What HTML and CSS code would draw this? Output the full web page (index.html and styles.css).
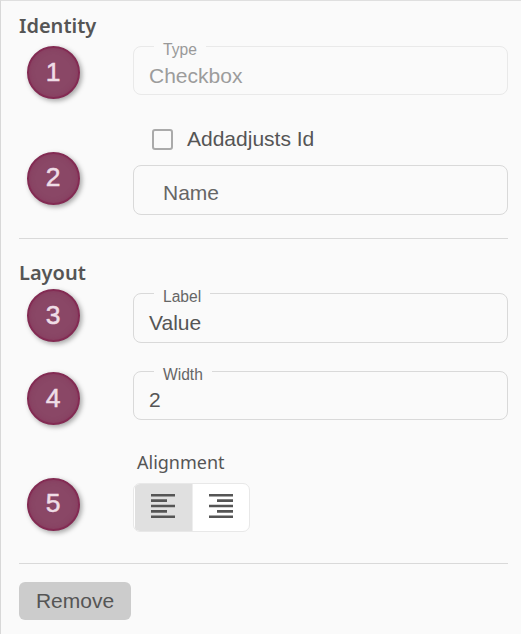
FILE: index.html
```html
<!DOCTYPE html>
<html lang="en">
<head>
<meta charset="utf-8">
<title>Properties</title>
<link rel="stylesheet" href="styles.css">
</head>
<body>
<main class="panel">
  <section class="section identity">
    <h2 class="heading">Identity</h2>
    <div class="row type-row">
      <span class="badge">1</span>
      <div class="field disabled"><span class="legend">Type</span><span class="value">Checkbox</span></div>
    </div>
    <div class="row name-row">
      <span class="badge">2</span>
      <div class="stack">
        <label class="check"><span class="box"></span><span class="check-text">Addadjusts Id</span></label>
        <div class="field empty"><span class="value">Name</span></div>
      </div>
    </div>
  </section>
  <section class="section layout">
    <h2 class="heading">Layout</h2>
    <div class="row label-row">
      <span class="badge">3</span>
      <div class="field tall"><span class="legend">Label</span><span class="value">Value</span></div>
    </div>
    <div class="row width-row">
      <span class="badge">4</span>
      <div class="field"><span class="legend">Width</span><span class="value">2</span></div>
    </div>
    <div class="row align-row">
      <span class="badge">5</span>
      <div class="stack">
        <span class="caption">Alignment</span>
        <div class="toggle">
          <span class="option selected"><svg width="24" height="24" viewBox="0 0 24 24"><path d="M0 0h24v2.6H0zM0 5.35h16v2.6H0zM0 10.7h24v2.6H0zM0 16.05h16v2.6H0zM0 21.4h24V24H0z"/></svg></span>
          <span class="option"><svg width="24" height="24" viewBox="0 0 24 24"><path d="M0 0h24v2.6H0zM8 5.35h16v2.6H8zM0 10.7h24v2.6H0zM8 16.05h16v2.6H8zM0 21.4h24V24H0z"/></svg></span>
        </div>
      </div>
    </div>
  </section>
  <button class="remove" type="button">Remove</button>
</main>
</body>
</html>
```
FILE: styles.css
```css
* { box-sizing: border-box; }
body { margin: 0; background: #fafafa; }
.panel {
  height: 634px;
  padding: 0 13px 0 18px;
  border-top: 1px solid #dfdfdf;
  border-left: 1px solid #d8d8d8;
  font-family: "Liberation Sans", Arial, sans-serif;
  font-size: 21px;
  color: #555;
}
.section { border-bottom: 1px solid #d9d9d9; }
.identity { height: 238px; padding-top: 11px; }
.layout { height: 325px; padding-top: 20px; }
.heading {
  margin: 0;
  height: 28px;
  font: 600 20px/28px "Noto Sans", sans-serif;
}
.row {
  display: grid;
  grid-template-columns: 114px 1fr;
  align-items: start;
}
.badge {
  display: flex;
  align-items: center;
  justify-content: center;
  width: 53px;
  height: 53px;
  margin: 1px 0 0 7.5px;
  padding-bottom: 1px;
  border: 2px solid #832b53;
  border-radius: 50%;
  background: #8a4766;
  box-shadow: 2px 2px 5px rgba(0, 0, 0, .35), inset 0 0 5px rgba(131, 43, 83, .5);
  color: #efdde6;
  font-size: 26.5px;
  line-height: 1;
  -webkit-text-stroke: .5px #efdde6;
}
.field {
  position: relative;
  height: 49px;
  padding: 17px 15px 0;
  border: 1px solid #d9d9d9;
  border-radius: 8px;
  line-height: 24px;
}
.value { display: block; }
.tall, .empty { height: 50px; }
.empty { padding: 15px 29px 0; color: #666; }
.legend {
  position: absolute;
  top: -7px;
  left: 20px;
  padding: 0 9px;
  background: #fafafa;
  font-size: 15.6px;
  line-height: 20px;
  color: #666;
}
.width-row .field { padding-top: 16px; }
.disabled { border-color: #e9e9e9; color: #9c9c9c; }
.disabled .legend { color: #999; }
.type-row { margin-top: 5px; }
.type-row .field { margin-top: 1px; }
.name-row { margin-top: 29px; }
.name-row .badge { margin-top: 23.5px; }
.check {
  display: flex;
  align-items: center;
  height: 22px;
  padding-left: 19px;
  margin-bottom: 15px;
}
.box {
  width: 21px;
  height: 21px;
  margin-right: 14px;
  border: 2px solid #aaa;
  border-radius: 3px;
}
.label-row { margin-top: 2px; }
.label-row .badge { margin-top: 0; }
.label-row .field { margin-top: 4px; }
.width-row { margin-top: 28px; }
.align-row { margin-top: 25px; }
.align-row .badge { margin-top: 27.5px; }
.caption {
  display: block;
  height: 33px;
  padding-left: 4px;
  font: 18px/24px "Noto Sans", sans-serif;
}
.toggle {
  display: flex;
  width: 117px;
  height: 49px;
  border: 1px solid #e8e8e8;
  border-radius: 7px;
  background: #fff;
  overflow: hidden;
}
.option { flex: 1; padding: 10px 0 0 16px; }
.selected { border-left: 1px solid #fff; border-right: 1px solid #eee; background: #e0e0e0; }
.option svg { display: block; fill: #555; }
.remove {
  display: block;
  width: 112px;
  height: 38px;
  margin-top: 18px;
  padding: 0;
  border: 0;
  border-radius: 6px;
  background: #ccc;
  color: #555;
  font: 21px "Liberation Sans", Arial, sans-serif;
}
```
